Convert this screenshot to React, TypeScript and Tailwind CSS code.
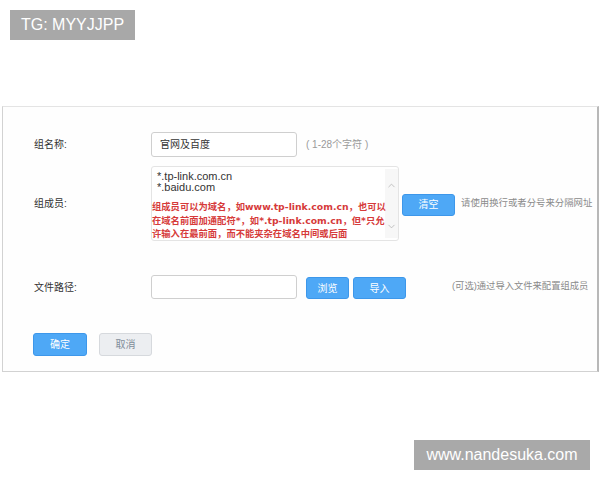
import { ChevronUp, ChevronDown } from "lucide-react";

const CJK = "font-['Liberation_Sans','Noto_Sans_CJK_SC',sans-serif]";

function BlueButton({ label, w }: { label: string; w: string }) {
  return (
    <button
      className={`${w} h-[22px] shrink-0 rounded-[3px] border border-[#3d97ea] bg-[#4ea8f6] text-[10px] text-white ${CJK}`}
    >
      {label}
    </button>
  );
}

export default function App() {
  return (
    <div className={`relative w-[600px] h-[480px] bg-white ${CJK} overflow-hidden`}>
      <div className="pl-[10px] pt-[10px]">
        <div className="w-[125px] h-[30px] bg-[#a8a8a8] text-white text-[16px] leading-[30px] pl-[11px]">
          TG: MYYJJPP
        </div>
      </div>

      <div className="ml-[2px] mt-[66px] w-[597px] h-[266px] border border-[#d2d2d2] border-t-[#e4e4e4] border-r-2 border-r-[#b8b8b8] bg-[#fefefe] pt-[25px] pl-[31px]">
        {/* 组名称 */}
        <div className="flex items-center h-[25px]">
          <div className="w-[117px] shrink-0 text-[10px] text-[#333]">组名称:</div>
          <div className="w-[146px] h-[25px] shrink-0 rounded-[3px] border border-[#cfcfcf] bg-white pl-[8px] text-[10px] leading-[23px] text-[#333]">
            官网及百度
          </div>
          <div className="ml-[9px] text-[10px] text-[#9a9a9a] whitespace-nowrap">( 1-28个字符 )</div>
        </div>

        {/* 组成员 */}
        <div className="flex items-center mt-[9px] h-[75px]">
          <div className="w-[117px] shrink-0 text-[10px] text-[#333]">组成员:</div>
          <div className="relative w-[248px] h-[75px] shrink-0 rounded-[3px] border border-[#e4e4e4] bg-white">
            <div className="px-[5px] pt-[4px] text-[11px] leading-[11px] text-[#333]">
              <div>*.tp-link.com.cn</div>
              <div>*.baidu.com</div>
            </div>
            <div className="absolute right-0 top-[2px] bottom-[2px] w-[13px] bg-[#f4f4f4]/70 flex flex-col items-center pt-[11px]">
              <ChevronUp size={11} strokeWidth={1.5} className="text-[#aaa]" />
              <ChevronDown size={11} strokeWidth={1.5} className="text-[#aaa] mt-[30px]" />
            </div>
            <div className="relative mt-[7px] font-['DejaVu_Sans','Noto_Sans_CJK_SC',sans-serif] font-bold text-[9.3px] leading-[13.5px] text-[#d63a3a] whitespace-nowrap">
              <div>组成员可以为域名，如www.tp-link.com.cn，也可以</div>
              <div>在域名前面加通配符*，如*.tp-link.com.cn，但*只允</div>
              <div>许输入在最前面，而不能夹杂在域名中间或后面</div>
            </div>
          </div>
          <div className="ml-[3px] shrink-0">
            <BlueButton label="清空" w="w-[53px]" />
          </div>
          <div className="ml-[6px] text-[9.4px] text-[#8a8a8a] whitespace-nowrap">请使用换行或者分号来分隔网址</div>
        </div>

        {/* 文件路径 */}
        <div className="flex items-center mt-[34px] h-[24px]">
          <div className="w-[117px] shrink-0 text-[10px] text-[#333]">文件路径:</div>
          <div className="w-[146px] h-[24px] shrink-0 rounded-[3px] border border-[#cfcfcf] bg-white" />
          <div className="ml-[9px] shrink-0">
            <BlueButton label="浏览" w="w-[43px]" />
          </div>
          <div className="ml-[4px] shrink-0">
            <BlueButton label="导入" w="w-[53px]" />
          </div>
          <div className="ml-[46px] text-[9.3px] text-[#8a8a8a] whitespace-nowrap">(可选)通过导入文件来配置组成员</div>
        </div>

        {/* 按钮 */}
        <div className="flex items-center mt-[34px] -ml-[1px] gap-[12px]">
          <button className="w-[54px] h-[23px] rounded-[3px] border border-[#3d97ea] bg-[#4ea8f6] text-[10px] text-white">
            确定
          </button>
          <button className="w-[53px] h-[23px] rounded-[3px] border border-[#d6d9dd] bg-[#eceef1] text-[10px] text-[#7f8c99]">
            取消
          </button>
        </div>
      </div>

      <div className="absolute left-[414px] top-[440px] w-[176px] h-[30px] bg-[#a9a9a9] text-white text-[16px] leading-[30px] text-center">
        www.nandesuka.com
      </div>
    </div>
  );
}
